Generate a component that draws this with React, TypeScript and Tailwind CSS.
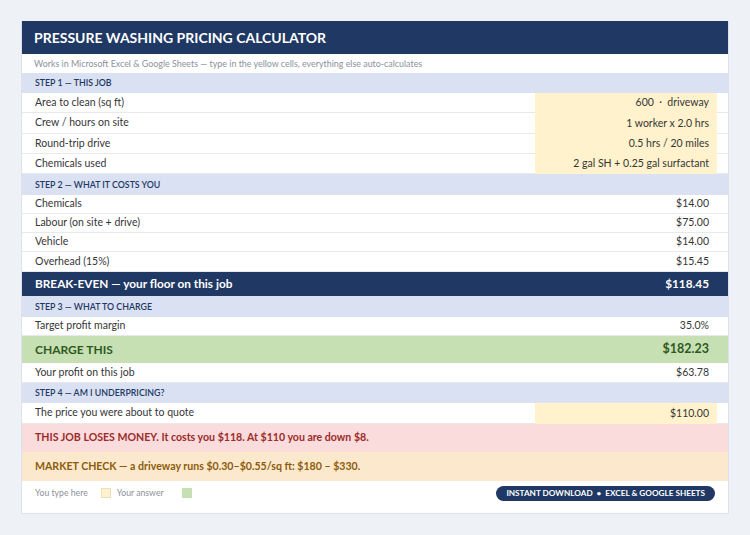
import React from "react";

type Row = { label: string; value: string; input?: boolean; h: string };

const step1: Row[] = [
    { label: "Area to clean (sq ft)", value: "600  ·  driveway", input: true, h: "h-[20px]" },
    { label: "Crew / hours on site", value: "1 worker x 2.0 hrs", input: true, h: "h-[21px]" },
    { label: "Round-trip drive", value: "0.5 hrs / 20 miles", input: true, h: "h-[20px]" },
    { label: "Chemicals used", value: "2 gal SH + 0.25 gal surfactant", input: true, h: "h-[20px]" },
];

const step2: Row[] = [
    { label: "Chemicals", value: "$14.00", h: "h-[19px]" },
    { label: "Labour (on site + drive)", value: "$75.00", h: "h-[19px]" },
    { label: "Vehicle", value: "$14.00", h: "h-[19px]" },
    { label: "Overhead (15%)", value: "$15.45", h: "h-[20px]" },
];

const StepHeader = ({ children, h }: { children: React.ReactNode; h: string }) => (
    <div className={`${h} flex items-center bg-[#d9e1f2] px-[13px] text-[8.8px] font-semibold text-[#1f3864] uppercase`}>
        {children}
    </div>
);

const DataRow = ({ row }: { row: Row }) => (
    <div className={`${row.h} flex text-[10.5px] text-[#363636]`}>
        <div className="flex-1 flex items-center pl-[13px] border-b border-[#e6e9ee]">{row.label}</div>
        {row.input ? (
            <div className="w-[182px] flex items-center justify-end pr-2 bg-[#fff2cc] whitespace-pre">{row.value}</div>
        ) : (
            <div className="w-[182px] flex items-center justify-end pr-2 border-b border-[#e6e9ee] whitespace-pre">{row.value}</div>
        )}
        <div className="w-[11px] border-b border-[#e6e9ee]" />
    </div>
);

export default function App() {
    return (
        <div className="w-[750px] h-[535px] bg-[#eef1f6] pt-[21px] pl-[21px] font-['Lato',sans-serif]">
            <div className="w-[708px] bg-white border border-[#dde2ea] border-t-0 flex flex-col">
                {/* Title */}
                <div className="h-[33px] flex items-center bg-[#1f3864] px-3 text-white text-[14px] font-bold">
                    PRESSURE WASHING PRICING CALCULATOR
                </div>
                <div className="h-[19px] flex items-center px-3 text-[8.9px] text-[#8c919a]">
                    Works in Microsoft Excel &amp; Google Sheets — type in the yellow cells, everything else auto-calculates
                </div>

                <StepHeader h="h-[20px]">Step 1 — This job</StepHeader>
                {step1.map((r) => (
                    <DataRow key={r.label} row={r} />
                ))}

                <StepHeader h="h-[21px]">Step 2 — What it costs you</StepHeader>
                {step2.map((r) => (
                    <DataRow key={r.label} row={r} />
                ))}

                {/* Break-even */}
                <div className="h-[24px] flex items-center justify-between bg-[#1f3864] pl-[13px] pr-[19px] text-white text-[11.8px] font-bold">
                    <span>BREAK-EVEN — your floor on this job</span>
                    <span>$118.45</span>
                </div>

                <StepHeader h="h-[21px]">Step 3 — What to charge</StepHeader>
                <DataRow row={{ label: "Target profit margin", value: "35.0%", h: "h-[19px]" }} />

                {/* Charge this */}
                <div className="h-[27px] flex items-center justify-between bg-[#c6e0b4] pl-[13px] pr-[19px] text-[#2f5a1d] font-bold">
                    <span className="text-[12px]">CHARGE THIS</span>
                    <span className="text-[12.5px]">$182.23</span>
                </div>

                <DataRow row={{ label: "Your profit on this job", value: "$63.78", h: "h-[20px]" }} />

                <StepHeader h="h-[20px]">Step 4 — Am I underpricing?</StepHeader>
                <DataRow row={{ label: "The price you were about to quote", value: "$110.00", input: true, h: "h-[21px]" }} />

                <div className="h-[28px] flex items-center bg-[#f9dcdb] px-[13px] text-[10.6px] font-bold text-[#9c2b2b]">
                    THIS JOB LOSES MONEY. It costs you $118. At $110 you are down $8.
                </div>
                <div className="h-[29px] flex items-center bg-[#fce9cd] px-[13px] text-[10.6px] font-bold text-[#8c5c0c]">
                    MARKET CHECK — a driveway runs $0.30–$0.55/sq ft: $180 – $330.
                </div>

                {/* Legend + badge */}
                <div className="h-[32px] flex items-start justify-between pl-[13px] pr-[13px] pt-[5px]">
                    <div className="flex items-center text-[8.7px] text-[#8c919a]">
                        <span>You type here</span>
                        <span className="ml-[13px] w-[10px] h-[10px] bg-[#fff2cc] border border-[#eadfb8]" />
                        <span className="ml-[6px]">Your answer</span>
                        <span className="ml-[18px] w-[10px] h-[10px] bg-[#c6e0b4]" />
                    </div>
                    <div className="h-[15px] px-[10px] flex items-center rounded-full bg-[#1f3864] text-white text-[8.2px] font-bold">
                        INSTANT DOWNLOAD&nbsp;&nbsp;•&nbsp;&nbsp;EXCEL &amp; GOOGLE SHEETS
                    </div>
                </div>
            </div>
        </div>
    );
}
